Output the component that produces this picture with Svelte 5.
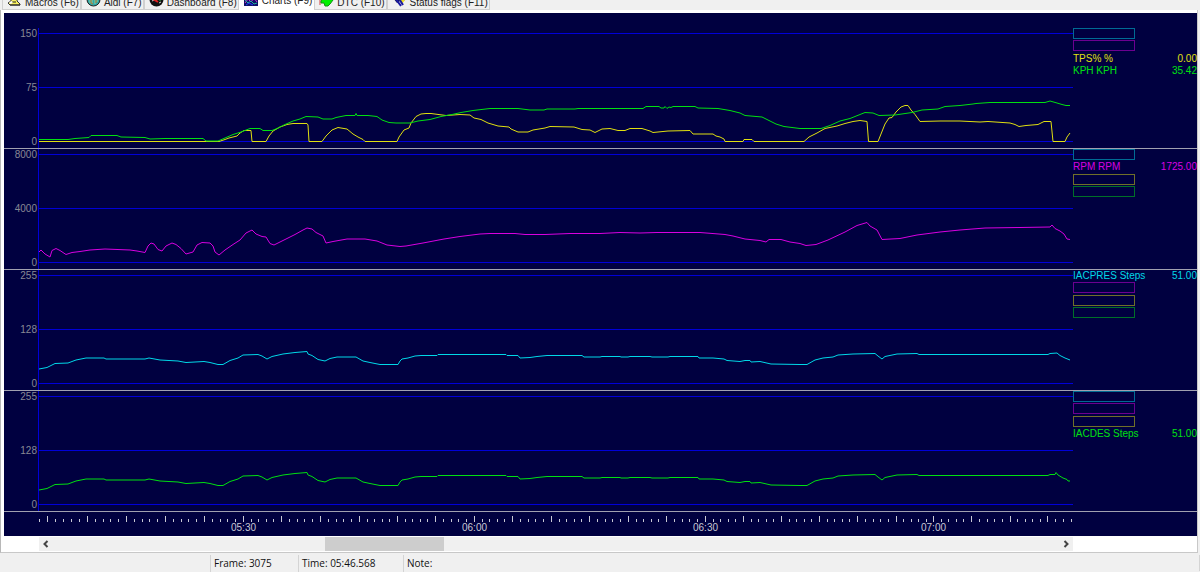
<script>
  const tabs = [
    { name: 'Macros (F6)', icon: 'macro' },
    { name: 'Aldl (F7)', icon: 'aldl' },
    { name: 'Dashboard (F8)', icon: 'dash' },
    { name: 'Charts (F9)', icon: 'chart' },
    { name: 'DTC (F10)', icon: 'dtc' },
    { name: 'Status flags (F11)', icon: 'flags' },
  ];
  let active = $state(3);
  let position = $state(307);

  const LEFT = 38;
  const WIDTH = 1035;

  const tps = '39,141.5 219,141.5 225,139.5 229,138 237,136 240,133 244,130.5 251,130.5 252,141.5 266,141.5 269,136 273,131 280,127 287,124.5 293,123.5 307,123.5 308,125 309,141.5 322,141.5 326,136 332,130 338,127.5 347,129 353,134 358,137 363,139.5 365,141.5 397,141.5 399,137 404,130 409,128 411,123 416,116.5 421,114 426,113.5 431,113.5 446,115.5 460,114.5 470,115 474,118 481,119.5 488,123 498,126 509,127 511,129 518,132 528,132 533,130 545,128 550,126.5 574,127 582,129.5 590,130 595,132.5 602,129 610,128.5 618,130.5 625,130.5 630,128.5 642,128.5 650,131 653,132.5 668,131 690,130.5 693,134 713,134 716,136 720,137 724,139 725,141.5 743,141.5 744,139.5 752,139.5 754,141.5 804,141.5 809,137 817,133 825,128.5 837,126 845,123.5 853,121.5 860,120.5 867,121.5 868.5,141.5 878,141.5 881,134 885,124 889,118 892,117.5 896,112 901,107 905,105.5 908,105.5 911,110 915,114.5 920,121.5 940,121 960,121 980,122 988,121.5 1010,123 1015,124.5 1019,126.5 1026,125.5 1038,124.5 1044,121.5 1051,121.5 1053,141.5 1065,141.5 1067,137 1070,133';
  const kph = '39,139.5 68,139.5 75,138.5 89,137.5 91,135.5 117,135.5 121,137 145,137.5 150,139 165,138.5 203,138.5 206,141 218,141 225,138 233,134.5 241,132 250,128.5 260,128.5 263,130.5 272,130.5 277,128.5 285,124.5 293,121 300,119 306,116.5 318,117 323,119 332,119 336,117.5 346,115.5 355,115.5 356,113.5 357,115.5 368,115.5 377,116.5 382,120 389,122.5 396,123 410,123 418,121 430,119.5 441,116.5 452,114.5 461,112.5 473,110.5 490,108.5 518,108.5 530,110 544,110 547,109 575,109 578,108.5 643,108.5 646,106.5 659,106.5 661,108 664,108 665,106.5 667,108.5 669,107 671,107.5 673,106.5 695,106.5 698,108 718,108.5 730,110.5 740,113 745,115.5 762,117 770,121 776,124 784,126.5 800,128.5 821,128.5 830,125.5 840,121 850,118.5 860,114.5 865,112.5 873,113 879,115.5 895,115 912,112.5 922,110 938,109 945,106.5 960,105.5 973,104 976,103.5 990,102.5 1045,102.5 1050,101 1057,103 1062,104.5 1066,105.5 1070,105.5';
  const rpm = '39,252 41,250 45,254 50,257 52,250.5 56,248.5 60,250.5 66,254.5 72,252.5 80,251.5 90,250 105,249 130,250 137,251 145,252.5 148,246 151,243 154,244 158,249.5 162,251 166,246 172,243 176,244.5 181,248.5 186,254 193,252 197,245 202,242.5 210,243 213,246 215,252 219,255 225,250 233,244.5 240,240 246,233 252,230 256,234 262,236.5 266,237 270,243.5 274,245 282,241 295,234.5 303,230 307,228 312,229 316,232.5 323,236 326,243 333,241.5 347,239 365,239 377,241 387,245 400,246.5 406,246 423,243 444,239 460,236.5 480,234 490,233.5 515,233.5 525,234.5 545,234.5 570,233.5 600,233.5 620,232.5 640,233 657,232.5 700,232.5 725,234.5 733,236 745,239 760,240.5 766,242 769,239.5 781,239.5 790,242 800,243.5 806,245.5 816,244.5 828,240 845,232 857,225.5 867,222.5 870,226 877,230 882,239.5 900,238.5 917,235 940,232 960,230 985,228 1020,227.5 1050,227 1052,225 1055,228.5 1060,231 1064,234 1067,239 1070,239.5';
  const iacBody = [
    [39,369],[47,367.5],[55,363.5],[68,363],[76,360],[86,358],[104,358],[106,359],[145,359],[149,358],[160,360],[178,361],[186,362.5],[204,361.5],[210,362.5],[218,364.5],[223,364.5],[230,360.5],[238,358],[243,355],[258,354.5],[262,356],[267,359],[272,356.5],[283,354],[295,352.5],[307,351.5],[308,354],[312,355.5],[318,359.5],[325,361],[330,358.5],[337,357],[356,357],[363,361],[370,362.5],[380,364.5],[398,364.5],[400,361],[402,359],[408,358],[415,356],[421,355.5],[437,355.5],[438,354.5],[506,354.5],[507,355.5],[518,355.5],[520,358],[530,357.5],[537,356.5],[547,355.5],[582,355.5],[584,357],[600,357],[602,356.5],[620,356.5],[621,357],[628,357],[630,356.5],[650,356.5],[652,357],[668,357],[670,356.5],[698,356.5],[699,358],[713,358],[724,359],[727,360.5],[740,361.5],[745,360.5],[750,360.5],[751,362],[760,361.5],[771,364],[800,364.5],[807,364.5],[815,360],[823,358],[833,357],[838,355],[853,354],[875,353.5],[878,356],[882,359],[885,356.5],[897,354],[917,353.5],[919,354.5],[1048,354.5],[1050,353.5],
  ];
  const join = (pts, dy = 0) => pts.map(([x, y]) => `${x},${y + dy}`).join(' ');
  const iacPres = join([...iacBody, [1057,353],[1060,355.5],[1065,358],[1070,360]]);
  const iacDes = join([...iacBody, [1055,353.5],[1056,351.5],[1058,354],[1063,357],[1067,358.5],[1068,360],[1070,360]], 121);

  const panels = [
    {
      top: 28, scale: [150, 75, 0],
      lines: [{ color: 'yellow', points: tps }, { color: 'green', points: kph }],
      legend: [{ color: 'cyan' }, { color: 'magenta' }, { color: 'yellow', name: 'TPS% %', value: '0.00' }, { color: 'green', name: 'KPH KPH', value: '35.42' }],
    },
    {
      top: 149, scale: [8000, 4000, 0],
      lines: [{ color: 'magenta', points: rpm }],
      legend: [{ color: 'cyan' }, { color: 'magenta', name: 'RPM RPM', value: '1725.00' }, { color: 'yellow' }, { color: 'green' }],
    },
    {
      top: 270, scale: [255, 128, 0],
      lines: [{ color: 'cyan', points: iacPres }],
      legend: [{ color: 'cyan', name: 'IACPRES Steps', value: '51.00' }, { color: 'magenta' }, { color: 'yellow' }, { color: 'green' }],
    },
    {
      top: 391, scale: [255, 128, 0],
      lines: [{ color: 'green', points: iacDes }],
      legend: [{ color: 'cyan' }, { color: 'magenta' }, { color: 'yellow' }, { color: 'green', name: 'IACDES Steps', value: '51.00' }],
    },
  ];

  // Five-second marks; the four seconds between two marks are spread evenly.
  const majors = [9, 49, 88, 127, 166, 205, 243, 282, 321, 359, 397, 436, 474, 513, 551, 590, 628, 667, 705, 743, 781, 819, 858, 895, 933, 972, 1009];
  const percent = (x) => `${((x + 0.5) / WIDTH) * 100}%`;
  const ticks = [{ x: 1, major: false }];
  majors.forEach((m, i) => {
    ticks.push({ x: m, major: true });
    const step = i < majors.length - 1 ? (majors[i + 1] - m) / 5 : 8;
    for (let k = 1; k < 5 && m + k * step < WIDTH; k++) ticks.push({ x: Math.round(m + k * step), major: false });
  });
  const times = [{ x: 205, text: '05:30' }, { x: 436, text: '06:00' }, { x: 667, text: '06:30' }, { x: 895, text: '07:00' }];
</script>

{#snippet glyph(kind)}
  <svg class="icon" viewBox="0 0 15 15" aria-hidden="true">
    {#if kind === 'macro'}
      <path d="M4 2h7l-1 7 3 3v1H3l-2-2 3-2z" fill="#f8f060" stroke="#333" />
      <path d="M3 13h10M5 10h4" stroke="#222" />
      <path d="M4 9l-2 2 2 1 2-2z" fill="#fff" />
    {:else if kind === 'aldl'}
      <circle cx="7.500" cy="7.500" r="6.500" fill="#30a8a8" stroke="#222" />
      <path d="M4 3v8M6 4v8M9 3v9M11 4v6" stroke="#8fd0a0" />
      <path d="M5 5v6l2 1M10 5v6" stroke="#b07830" fill="none" />
    {:else if kind === 'dash'}
      <circle cx="7.500" cy="7.500" r="7" fill="#111" />
      <path d="M3 9l2-1M11 5l-4 4M10 11l2-1" stroke="#d8d8d8" />
      <path d="M4 7l5 3" stroke="#e02020" stroke-width="2" />
      <path d="M10 8h2" stroke="#20c040" />
    {:else if kind === 'chart'}
      <path d="M0 0h14v14H0z" fill="#101068" />
      <path d="M1 11l3-4 3 3 3-4 3 4" stroke="#d030d0" fill="none" />
      <path d="M1 8l3 3 3-2 3 3 3-1" stroke="#20b0a0" fill="none" />
      <path d="M2 13l3-2 4 2" stroke="#2040ff" fill="none" />
    {:else if kind === 'dtc'}
      <path d="M1 4v9" stroke="#d04040" />
      <path d="M2 9l3-4h6l3 3-3 4-2 2H6l-1-3H2z" fill="#00f000" stroke="#109010" />
    {:else}
      <path d="M1 6l4-3 3 6-3 2z" fill="#181850" />
      <path d="M6 6l4-3 3 5-3 4z" fill="#f0e020" />
      <path d="M3 6l6 8M6 5l5 8M11 3l2 5" stroke="#1818a0" stroke-width="2" />
    {/if}
  </svg>
{/snippet}

<main>
  <nav role="tablist" aria-label="Views">
    {#each tabs as tab, i}
      <button role="tab" class:active={active === i} aria-selected={active === i} onclick={() => (active = i)}>
        {@render glyph(tab.icon)}{tab.name}
      </button>
    {/each}
  </nav>

  <section class="page">
    <div class="charts">
      {#each panels as panel}
        <div class="panel">
          <div class="scale">
            {#each panel.scale as mark}<span>{mark}</span>{/each}
          </div>
          <svg class="plot" viewBox="{LEFT} {panel.top} {WIDTH} 120" preserveAspectRatio="none" aria-hidden="true">
            {#each [5.5, 59.5, 113.5] as y}
              <line class="grid" x1={LEFT} x2={LEFT + WIDTH} y1={panel.top + y} y2={panel.top + y} />
            {/each}
            <line class="grid" x1={LEFT + 0.5} x2={LEFT + 0.5} y1={panel.top} y2={panel.top + 121} />
            {#each panel.lines as line}
              <polyline class="trace {line.color}" points={line.points} />
            {/each}
          </svg>
          <ul class="legend">
            {#each panel.legend as item}
              <li class={item.color}>
                {#if item.name}
                  <span>{item.name}</span><span>{item.value}</span>
                {:else}
                  <i></i>
                {/if}
              </li>
            {/each}
          </ul>
        </div>
      {/each}
      <div class="timeline">
        <svg aria-hidden="true">
          {#each ticks as tick}
            <line x1={percent(tick.x)} x2={percent(tick.x)} y1={tick.major ? 4 : 7} y2="10" />
          {/each}
          {#each times as time}
            <text x={percent(time.x)} y="19">{time.text}</text>
          {/each}
        </svg>
      </div>
    </div>
    <div class="scroll">
      <button aria-label="Scroll back" onclick={() => (position -= 10)}>
        <svg viewBox="0 0 14 14"><path d="M8.500 4L5.500 7l3 3" /></svg>
      </button>
      <input type="range" min="0" max="1000" aria-label="Log position" bind:value={position} />
      <button aria-label="Scroll forward" onclick={() => (position += 10)}>
        <svg viewBox="0 0 14 14"><path d="M5.500 4l3 3-3 3" /></svg>
      </button>
    </div>
  </section>

  <footer>
    <span></span>
    <span>Frame: 3075</span>
    <span>Time: 05:46.568</span>
    <span>Note:</span>
  </footer>
</main>

<style>
  :global(body) {
    margin: 0;
    background: #f0f0f0;
  }
  main {
    font: 10px/12px "Liberation Sans", Arial, sans-serif;
    color: #222;
    overflow: hidden;
  }
  nav {
    display: flex;
    align-items: flex-end;
    height: 10px;
    padding-left: 2px;
    overflow: hidden;
  }
  nav button {
    display: flex;
    flex: none;
    align-items: center;
    gap: 3px;
    box-sizing: border-box;
    height: 20px;
    margin: 0;
    padding: 6px 1px 0 4px;
    border: 1px solid #d0d0d0;
    background: #f0f0f0;
    font: inherit;
    color: inherit;
    white-space: nowrap;
  }
  nav button.active {
    padding-top: 2px;
    border-color: #fff;
    background: #fff;
  }
  .icon {
    width: 15px;
    height: 15px;
    flex: none;
    margin-bottom: 8px;
  }
  .active .icon {
    margin-bottom: 3px;
  }
  .page {
    padding: 3px 0 1px 3px;
    border-left: 1px solid #b8b8b8;
    border-bottom: 1px solid #c8c8c8;
    margin-right: 2px;
    border-right: 1px solid #c8c8c8;
    background: #fff;
  }
  .charts {
    padding-top: 15px;
    background: #000040;
  }
  .panel {
    display: grid;
    grid-template-columns: 34px minmax(0, 1fr) 124px;
    height: 120px;
    border-bottom: 1px solid #a0a0b0;
  }
  .scale {
    display: flex;
    flex-direction: column;
    justify-content: space-between;
    align-items: flex-end;
    padding-right: 1px;
    color: #888894;
  }
  .plot {
    width: 100%;
    height: 120px;
  }
  .grid {
    stroke: #0000d8;
    shape-rendering: crispEdges;
    vector-effect: non-scaling-stroke;
  }
  .trace {
    fill: none;
    stroke: currentColor;
    vector-effect: non-scaling-stroke;
  }
  .cyan { color: #00d8e8; }
  .magenta { color: #d800e0; }
  .yellow { color: #e0e010; }
  .green { color: #00e010; }
  .legend {
    display: grid;
    grid-template-rows: repeat(4, 1fr);
    height: 49px;
    margin: 0;
    padding: 0;
    list-style: none;
  }
  .legend li {
    display: flex;
    justify-content: space-between;
    white-space: nowrap;
  }
  .legend i {
    box-sizing: border-box;
    width: 62px;
    height: 11px;
    border: 1px solid currentColor;
    opacity: 0.5;
  }
  .timeline {
    display: grid;
    grid-template-columns: 34px minmax(0, 1fr) 124px;
  }
  .timeline svg {
    grid-column: 2;
    width: 100%;
    height: 24px;
  }
  .timeline line {
    stroke: #c8c8d4;
  }
  .timeline text {
    fill: #c8c8d4;
    text-anchor: middle;
  }
  .scroll {
    display: flex;
    height: 14px;
    margin: 1px 124px 0 35px;
    background: #f0f0f0;
  }
  .scroll button {
    width: 14px;
    height: 14px;
    padding: 0;
    border: 0;
    background: none;
  }
  .scroll svg {
    display: block;
    width: 14px;
    height: 14px;
    fill: none;
    stroke: #444;
    stroke-width: 2;
  }
  .scroll input {
    flex: 1;
    min-width: 0;
    height: 14px;
    margin: 0;
    appearance: none;
    background: none;
  }
  .scroll input::-webkit-slider-thumb {
    appearance: none;
    width: 119px;
    height: 14px;
    border-radius: 0;
    background: #cdcdcd;
  }
  footer {
    display: grid;
    grid-template-columns: 210px 88px 105px minmax(0, 1fr);
    height: 16px;
    margin: 2px 0 1px;
    border-right: 1px solid #d4d4d4;
    font: 10px/17px "Open Sans", "Noto Sans", sans-serif;
    color: #111;
  }
  footer span {
    padding-left: 4px;
  }
  footer span + span {
    padding-left: 3px;
    border-left: 1px solid #d4d4d4;
  }
</style>
